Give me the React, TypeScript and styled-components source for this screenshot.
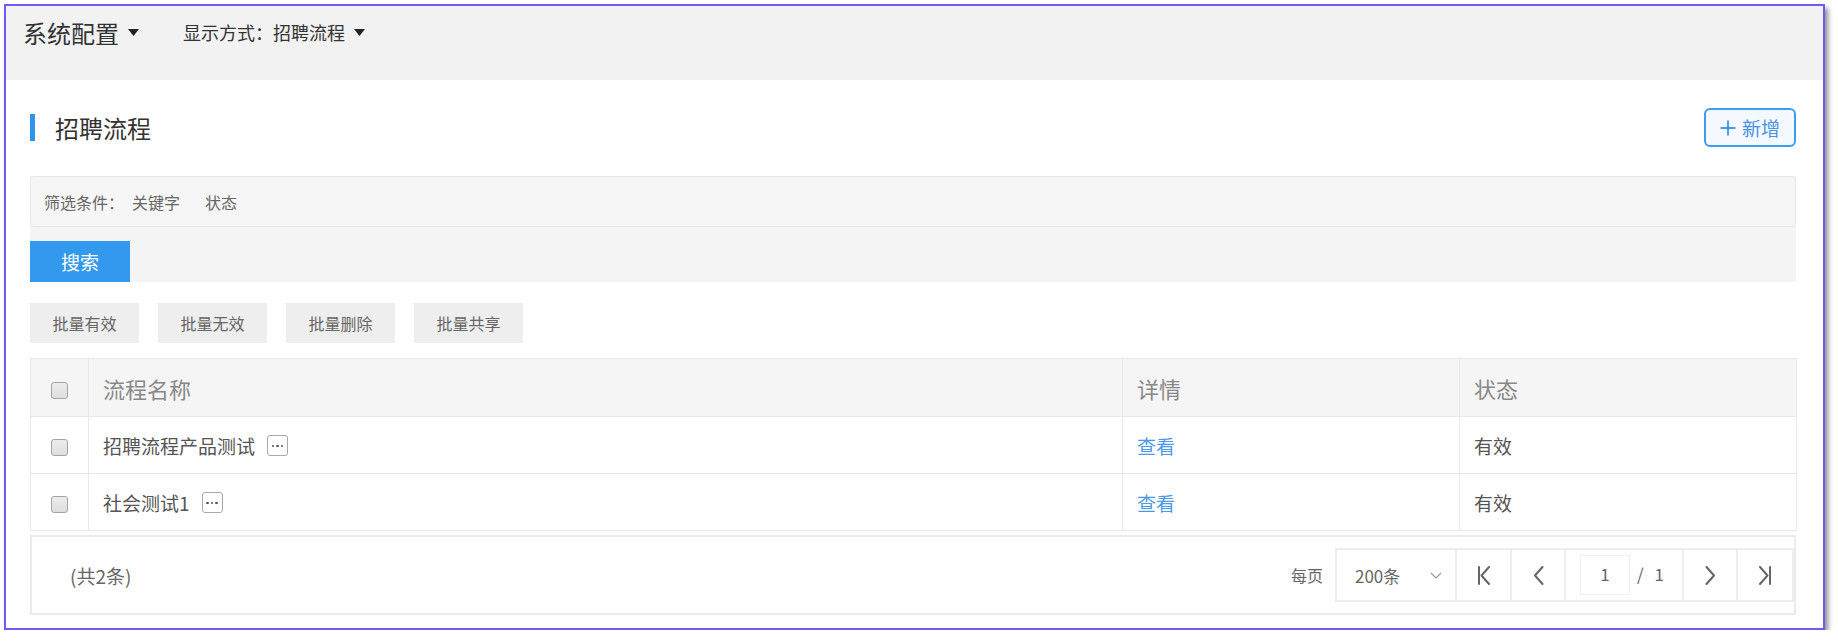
import React from 'react';
import styled, { createGlobalStyle } from 'styled-components';

const Global = createGlobalStyle`
  html, body { margin: 0; padding: 0; background: #fff; }
  body { font-family: "Noto Sans CJK SC", "Noto Sans", sans-serif; color: #333; }
  * { box-sizing: border-box; }
`;

const Frame = styled.div`
  margin: 4px 0 0 4px;
  width: 1821px;
  height: 626px;
  border: 2px solid #6c5cf5;
  box-shadow: 3px 4px 5px rgba(0, 0, 0, 0.45);
  background: #fff;
  display: flex;
  flex-direction: column;
`;

const TopBar = styled.div`
  height: 74px;
  background: #f2f2f2;
  display: flex;
  align-items: flex-start;
  padding: 8px 17px 0;
  gap: 44px;
`;

const TopMenu = styled.div<{ $size: number }>`
  display: flex;
  align-items: center;
  height: 36px;
  font-size: ${(p) => p.$size}px;
  color: #333;
  gap: 9px;
  white-space: nowrap;
`;

const Caret = () => (
  <svg width="11" height="7" viewBox="0 0 11 7">
    <polygon points="0,0 11,0 5.5,7" fill="#222" />
  </svg>
);

const Main = styled.div`
  flex: 1;
  display: flex;
  flex-direction: column;
  padding: 0 27px 0 24px;
`;

const TitleRow = styled.div`
  margin-top: 28px;
  height: 39px;
  display: flex;
  align-items: center;
  justify-content: space-between;
`;

const Title = styled.h2`
  margin: 0;
  display: flex;
  align-items: center;
  gap: 20px;
  font-size: 24px;
  font-weight: normal;
  color: #333;
  &::before {
    content: '';
    width: 5px;
    height: 27px;
    background: #2e95ee;
  }
`;

const AddButton = styled.button`
  width: 92px;
  height: 39px;
  border: 2px solid #3c9cf0;
  border-radius: 6px;
  background: #f4f9ff;
  color: #4990e2;
  font-family: inherit;
  font-size: 19px;
  display: flex;
  align-items: center;
  justify-content: center;
  gap: 6px;
  padding: 0;
`;

const FilterPanel = styled.div`
  margin-top: 29px;
  background: #f4f4f4;
  display: flex;
  flex-direction: column;
  align-items: flex-start;
`;

const FilterBox = styled.div`
  align-self: stretch;
  height: 51px;
  background: #f6f6f6;
  border: 1px solid #e8e8e8;
  border-radius: 4px;
  display: flex;
  align-items: center;
  padding-left: 13px;
  font-size: 16px;
  color: #666;
`;

const FilterLabel = styled.span`
  margin-right: 8px;
`;

const FilterItem = styled.span`
  margin-right: 25px;
`;

const SearchButton = styled.button`
  margin-top: 14px;
  width: 100px;
  height: 41px;
  border: none;
  background: #3399ee;
  color: #fff;
  font-family: inherit;
  font-size: 19px;
  padding: 0;
`;

const BatchRow = styled.div`
  margin-top: 21px;
  display: flex;
  gap: 19px;
`;

const BatchButton = styled.button`
  width: 109px;
  height: 40px;
  border: none;
  background: #eeeeee;
  color: #666;
  font-family: inherit;
  font-size: 16px;
  padding: 0;
`;

const Table = styled.table`
  margin-top: 15px;
  width: 100%;
  border-collapse: collapse;
  table-layout: fixed;
  border: 1px solid #e6e6e6;
`;

const HeadCell = styled.th`
  height: 58px;
  background: #f5f5f5;
  border: 1px solid #e8e8e8;
  text-align: left;
  padding: 0 0 0 14px;
  font-size: 22px;
  font-weight: normal;
  color: #888;
`;

const Cell = styled.td`
  height: 57px;
  border: 1px solid #e8e8e8;
  padding: 0 0 0 14px;
  font-size: 19px;
  color: #555;
  white-space: nowrap;
`;

const CheckCell = styled.td`
  border: 1px solid #e8e8e8;
  text-align: center;
  padding: 0;
`;

const CheckHeadCell = styled.th`
  background: #f5f5f5;
  border: 1px solid #e8e8e8;
  text-align: center;
  padding: 0;
`;

const CheckBox = styled.span`
  display: inline-block;
  width: 17px;
  height: 17px;
  border: 1px solid #a4a4a4;
  border-radius: 3px;
  background: linear-gradient(#ececec, #dedede);
  vertical-align: middle;
`;

const NameWrap = styled.span`
  display: inline-flex;
  align-items: center;
  gap: 12px;
`;

const MoreBox = styled.span`
  display: inline-flex;
  align-items: center;
  justify-content: center;
  gap: 2px;
  width: 21px;
  height: 21px;
  border: 1px solid #a8a8a8;
  border-radius: 3px;
  padding-top: 2px;
`;

const Dot = styled.span`
  width: 2.5px;
  height: 2.5px;
  border-radius: 50%;
  background: #555;
`;

const Link = styled.a`
  color: #4a9aea;
  text-decoration: none;
`;

const Footer = styled.div`
  margin-top: 4px;
  height: 80px;
  border: 2px solid #ececec;
  display: flex;
  align-items: center;
  justify-content: space-between;
  padding-left: 38px;
`;

const Total = styled.span`
  font-size: 19px;
  color: #666;
`;

const Pager = styled.div`
  display: flex;
  align-items: center;
  gap: 12px;
`;

const PerPage = styled.span`
  font-size: 16px;
  color: #666;
`;

const PagerGroup = styled.div`
  display: flex;
  height: 54px;
  border: 2px solid #ededed;
  border-right: none;
`;

const PagerCell = styled.div<{ $w: number }>`
  width: ${(p) => p.$w}px;
  border-right: 2px solid #ededed;
  display: flex;
  align-items: center;
  justify-content: center;
  color: #666;
  font-size: 17px;
`;

const SelectCell = styled(PagerCell)`
  justify-content: space-between;
  padding: 0 13px 0 18px;
  color: #666;
`;

const PageCell = styled(PagerCell)`
  justify-content: flex-start;
  padding-left: 14px;
  gap: 7px;
`;

const PageInput = styled.div`
  width: 50px;
  height: 40px;
  border: 1px solid #f0f0f0;
  display: flex;
  align-items: center;
  justify-content: center;
  padding-bottom: 3px;
`;

const PageText = styled.span`
  padding-bottom: 3px;
`;

const Icon = ({ kind }: { kind: 'first' | 'prev' | 'next' | 'last' }) => {
  const common = { fill: 'none', stroke: '#666', strokeWidth: 2, strokeLinecap: 'round' as const, strokeLinejoin: 'round' as const };
  if (kind === 'first')
    return (
      <svg width="14" height="19" viewBox="0 0 14 19">
        <line x1="2" y1="1" x2="2" y2="18" {...common} />
        <polyline points="12,1 4.5,9.5 12,18" {...common} />
      </svg>
    );
  if (kind === 'prev')
    return (
      <svg width="11" height="19" viewBox="0 0 11 19">
        <polyline points="9.5,1 2,9.5 9.5,18" {...common} />
      </svg>
    );
  if (kind === 'next')
    return (
      <svg width="11" height="19" viewBox="0 0 11 19">
        <polyline points="1.5,1 9,9.5 1.5,18" {...common} />
      </svg>
    );
  return (
    <svg width="14" height="19" viewBox="0 0 14 19">
      <polyline points="2,1 9.5,9.5 2,18" {...common} />
      <line x1="12" y1="1" x2="12" y2="18" {...common} />
    </svg>
  );
};

const ChevronDown = () => (
  <svg width="12" height="7" viewBox="0 0 12 7">
    <polyline points="1,1 6,6 11,1" fill="none" stroke="#999" strokeWidth="1.2" />
  </svg>
);

const PlusIcon = () => (
  <svg width="16" height="16" viewBox="0 0 16 16">
    <line x1="8" y1="0.5" x2="8" y2="15.5" stroke="#3a8fe6" strokeWidth="1.8" />
    <line x1="0.5" y1="8" x2="15.5" y2="8" stroke="#3a8fe6" strokeWidth="1.8" />
  </svg>
);

const rows = [
  { name: '招聘流程产品测试', status: '有效' },
  { name: '社会测试1', status: '有效' },
];

export default function App() {
  return (
    <>
      <Global />
      <Frame>
        <TopBar>
          <TopMenu $size={24}>
            系统配置 <Caret />
          </TopMenu>
          <TopMenu $size={18}>
            显示方式：招聘流程 <Caret />
          </TopMenu>
        </TopBar>
        <Main>
          <TitleRow>
            <Title>招聘流程</Title>
            <AddButton>
              <PlusIcon />
              新增
            </AddButton>
          </TitleRow>
          <FilterPanel>
            <FilterBox>
              <FilterLabel>筛选条件：</FilterLabel>
              <FilterItem>关键字</FilterItem>
              <FilterItem>状态</FilterItem>
            </FilterBox>
            <SearchButton>搜索</SearchButton>
          </FilterPanel>
          <BatchRow>
            <BatchButton>批量有效</BatchButton>
            <BatchButton>批量无效</BatchButton>
            <BatchButton>批量删除</BatchButton>
            <BatchButton>批量共享</BatchButton>
          </BatchRow>
          <Table>
            <colgroup>
              <col style={{ width: 58 }} />
              <col style={{ width: 1034 }} />
              <col style={{ width: 337 }} />
              <col style={{ width: 337 }} />
            </colgroup>
            <thead>
              <tr>
                <CheckHeadCell>
                  <CheckBox />
                </CheckHeadCell>
                <HeadCell>流程名称</HeadCell>
                <HeadCell>详情</HeadCell>
                <HeadCell>状态</HeadCell>
              </tr>
            </thead>
            <tbody>
              {rows.map((r) => (
                <tr key={r.name}>
                  <CheckCell>
                    <CheckBox />
                  </CheckCell>
                  <Cell>
                    <NameWrap>
                      {r.name}
                      <MoreBox>
                        <Dot />
                        <Dot />
                        <Dot />
                      </MoreBox>
                    </NameWrap>
                  </Cell>
                  <Cell>
                    <Link>查看</Link>
                  </Cell>
                  <Cell>{r.status}</Cell>
                </tr>
              ))}
            </tbody>
          </Table>
          <Footer>
            <Total>(共2条)</Total>
            <Pager>
              <PerPage>每页</PerPage>
              <PagerGroup>
                <SelectCell $w={120}>
                  <span>200条</span>
                  <ChevronDown />
                </SelectCell>
                <PagerCell $w={55}>
                  <Icon kind="first" />
                </PagerCell>
                <PagerCell $w={54}>
                  <Icon kind="prev" />
                </PagerCell>
                <PageCell $w={118}>
                  <PageInput>1</PageInput>
                  <PageText>/</PageText>
                  <PageText>&nbsp;1</PageText>
                </PageCell>
                <PagerCell $w={54}>
                  <Icon kind="next" />
                </PagerCell>
                <PagerCell $w={56}>
                  <Icon kind="last" />
                </PagerCell>
              </PagerGroup>
            </Pager>
          </Footer>
        </Main>
      </Frame>
    </>
  );
}
